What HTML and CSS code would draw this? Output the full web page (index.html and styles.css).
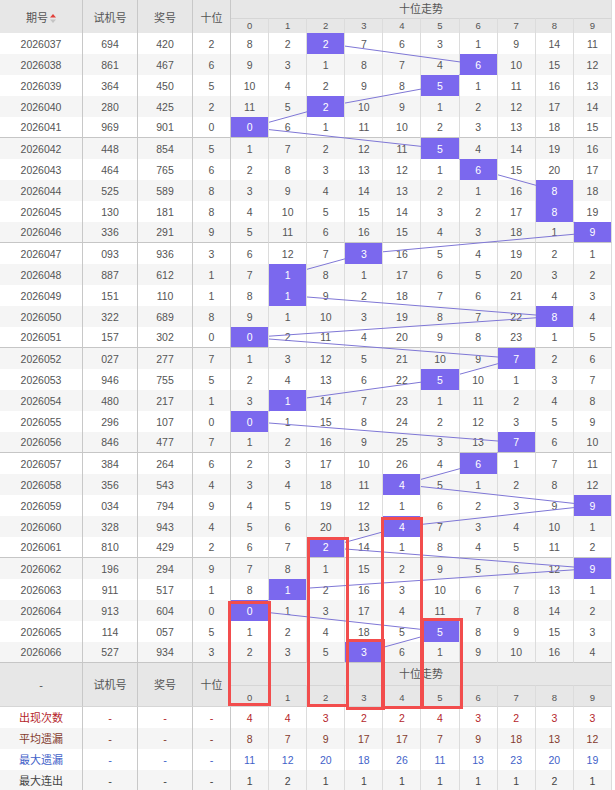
FILE: index.html
```html
<!DOCTYPE html>
<html lang="zh-CN">
<head>
<meta charset="utf-8">
<title>十位走势</title>
<link rel="stylesheet" href="styles.css">
</head>
<body>
<div class="board">
<table class="chart">
<colgroup><col class="c-issue"><col class="c-test"><col class="c-win"><col class="c-ten"><col><col><col><col><col><col><col><col><col><col></colgroup>
<thead>
<tr class="h1"><th rowspan="2" class="k">期号<svg class="sort" width="6" height="9" viewBox="0 0 6 9"><path d="M3 0 L6 3.5 L0 3.5 Z" fill="#e2403a"/><path d="M0 5.5 L6 5.5 L3 9 Z" fill="#c4c4c4"/></svg></th><th rowspan="2" class="k">试机号</th><th rowspan="2" class="k">奖号</th><th rowspan="2" class="k">十位</th><th colspan="10" class="span">十位走势</th></tr>
<tr class="h2"><th>0</th><th>1</th><th>2</th><th>3</th><th>4</th><th>5</th><th>6</th><th>7</th><th>8</th><th>9</th></tr>
</thead>
<tbody>
<tr><td class="k">2026037</td><td class="k">694</td><td class="k">420</td><td class="k">2</td><td>8</td><td>2</td><td class="hit">2</td><td>7</td><td>6</td><td>3</td><td>1</td><td>9</td><td>14</td><td>11</td></tr>
<tr><td class="k">2026038</td><td class="k">861</td><td class="k">467</td><td class="k">6</td><td>9</td><td>3</td><td>1</td><td>8</td><td>7</td><td>4</td><td class="hit">6</td><td>10</td><td>15</td><td>12</td></tr>
<tr><td class="k">2026039</td><td class="k">364</td><td class="k">450</td><td class="k">5</td><td>10</td><td>4</td><td>2</td><td>9</td><td>8</td><td class="hit">5</td><td>1</td><td>11</td><td>16</td><td>13</td></tr>
<tr><td class="k">2026040</td><td class="k">280</td><td class="k">425</td><td class="k">2</td><td>11</td><td>5</td><td class="hit">2</td><td>10</td><td>9</td><td>1</td><td>2</td><td>12</td><td>17</td><td>14</td></tr>
<tr class="ge"><td class="k">2026041</td><td class="k">969</td><td class="k">901</td><td class="k">0</td><td class="hit">0</td><td>6</td><td>1</td><td>11</td><td>10</td><td>2</td><td>3</td><td>13</td><td>18</td><td>15</td></tr>
<tr><td class="k">2026042</td><td class="k">448</td><td class="k">854</td><td class="k">5</td><td>1</td><td>7</td><td>2</td><td>12</td><td>11</td><td class="hit">5</td><td>4</td><td>14</td><td>19</td><td>16</td></tr>
<tr><td class="k">2026043</td><td class="k">464</td><td class="k">765</td><td class="k">6</td><td>2</td><td>8</td><td>3</td><td>13</td><td>12</td><td>1</td><td class="hit">6</td><td>15</td><td>20</td><td>17</td></tr>
<tr><td class="k">2026044</td><td class="k">525</td><td class="k">589</td><td class="k">8</td><td>3</td><td>9</td><td>4</td><td>14</td><td>13</td><td>2</td><td>1</td><td>16</td><td class="hit">8</td><td>18</td></tr>
<tr><td class="k">2026045</td><td class="k">130</td><td class="k">181</td><td class="k">8</td><td>4</td><td>10</td><td>5</td><td>15</td><td>14</td><td>3</td><td>2</td><td>17</td><td class="hit">8</td><td>19</td></tr>
<tr class="ge"><td class="k">2026046</td><td class="k">336</td><td class="k">291</td><td class="k">9</td><td>5</td><td>11</td><td>6</td><td>16</td><td>15</td><td>4</td><td>3</td><td>18</td><td>1</td><td class="hit">9</td></tr>
<tr><td class="k">2026047</td><td class="k">093</td><td class="k">936</td><td class="k">3</td><td>6</td><td>12</td><td>7</td><td class="hit">3</td><td>16</td><td>5</td><td>4</td><td>19</td><td>2</td><td>1</td></tr>
<tr><td class="k">2026048</td><td class="k">887</td><td class="k">612</td><td class="k">1</td><td>7</td><td class="hit">1</td><td>8</td><td>1</td><td>17</td><td>6</td><td>5</td><td>20</td><td>3</td><td>2</td></tr>
<tr><td class="k">2026049</td><td class="k">151</td><td class="k">110</td><td class="k">1</td><td>8</td><td class="hit">1</td><td>9</td><td>2</td><td>18</td><td>7</td><td>6</td><td>21</td><td>4</td><td>3</td></tr>
<tr><td class="k">2026050</td><td class="k">322</td><td class="k">689</td><td class="k">8</td><td>9</td><td>1</td><td>10</td><td>3</td><td>19</td><td>8</td><td>7</td><td>22</td><td class="hit">8</td><td>4</td></tr>
<tr class="ge"><td class="k">2026051</td><td class="k">157</td><td class="k">302</td><td class="k">0</td><td class="hit">0</td><td>2</td><td>11</td><td>4</td><td>20</td><td>9</td><td>8</td><td>23</td><td>1</td><td>5</td></tr>
<tr><td class="k">2026052</td><td class="k">027</td><td class="k">277</td><td class="k">7</td><td>1</td><td>3</td><td>12</td><td>5</td><td>21</td><td>10</td><td>9</td><td class="hit">7</td><td>2</td><td>6</td></tr>
<tr><td class="k">2026053</td><td class="k">946</td><td class="k">755</td><td class="k">5</td><td>2</td><td>4</td><td>13</td><td>6</td><td>22</td><td class="hit">5</td><td>10</td><td>1</td><td>3</td><td>7</td></tr>
<tr><td class="k">2026054</td><td class="k">480</td><td class="k">217</td><td class="k">1</td><td>3</td><td class="hit">1</td><td>14</td><td>7</td><td>23</td><td>1</td><td>11</td><td>2</td><td>4</td><td>8</td></tr>
<tr><td class="k">2026055</td><td class="k">296</td><td class="k">107</td><td class="k">0</td><td class="hit">0</td><td>1</td><td>15</td><td>8</td><td>24</td><td>2</td><td>12</td><td>3</td><td>5</td><td>9</td></tr>
<tr class="ge"><td class="k">2026056</td><td class="k">846</td><td class="k">477</td><td class="k">7</td><td>1</td><td>2</td><td>16</td><td>9</td><td>25</td><td>3</td><td>13</td><td class="hit">7</td><td>6</td><td>10</td></tr>
<tr><td class="k">2026057</td><td class="k">384</td><td class="k">264</td><td class="k">6</td><td>2</td><td>3</td><td>17</td><td>10</td><td>26</td><td>4</td><td class="hit">6</td><td>1</td><td>7</td><td>11</td></tr>
<tr><td class="k">2026058</td><td class="k">356</td><td class="k">543</td><td class="k">4</td><td>3</td><td>4</td><td>18</td><td>11</td><td class="hit">4</td><td>5</td><td>1</td><td>2</td><td>8</td><td>12</td></tr>
<tr><td class="k">2026059</td><td class="k">034</td><td class="k">794</td><td class="k">9</td><td>4</td><td>5</td><td>19</td><td>12</td><td>1</td><td>6</td><td>2</td><td>3</td><td>9</td><td class="hit">9</td></tr>
<tr><td class="k">2026060</td><td class="k">328</td><td class="k">943</td><td class="k">4</td><td>5</td><td>6</td><td>20</td><td>13</td><td class="hit">4</td><td>7</td><td>3</td><td>4</td><td>10</td><td>1</td></tr>
<tr class="ge"><td class="k">2026061</td><td class="k">810</td><td class="k">429</td><td class="k">2</td><td>6</td><td>7</td><td class="hit">2</td><td>14</td><td>1</td><td>8</td><td>4</td><td>5</td><td>11</td><td>2</td></tr>
<tr><td class="k">2026062</td><td class="k">196</td><td class="k">294</td><td class="k">9</td><td>7</td><td>8</td><td>1</td><td>15</td><td>2</td><td>9</td><td>5</td><td>6</td><td>12</td><td class="hit">9</td></tr>
<tr><td class="k">2026063</td><td class="k">911</td><td class="k">517</td><td class="k">1</td><td>8</td><td class="hit">1</td><td>2</td><td>16</td><td>3</td><td>10</td><td>6</td><td>7</td><td>13</td><td>1</td></tr>
<tr><td class="k">2026064</td><td class="k">913</td><td class="k">604</td><td class="k">0</td><td class="hit">0</td><td>1</td><td>3</td><td>17</td><td>4</td><td>11</td><td>7</td><td>8</td><td>14</td><td>2</td></tr>
<tr><td class="k">2026065</td><td class="k">114</td><td class="k">057</td><td class="k">5</td><td>1</td><td>2</td><td>4</td><td>18</td><td>5</td><td class="hit">5</td><td>8</td><td>9</td><td>15</td><td>3</td></tr>
<tr class="ge"><td class="k">2026066</td><td class="k">527</td><td class="k">934</td><td class="k">3</td><td>2</td><td>3</td><td>5</td><td class="hit">3</td><td>6</td><td>1</td><td>9</td><td>10</td><td>16</td><td>4</td></tr>
</tbody>
<tfoot>
<tr class="f1"><th rowspan="2" class="k">-</th><th rowspan="2" class="k">试机号</th><th rowspan="2" class="k">奖号</th><th rowspan="2" class="k">十位</th><th colspan="10" class="span">十位走势</th></tr>
<tr class="f2"><th>0</th><th>1</th><th>2</th><th>3</th><th>4</th><th>5</th><th>6</th><th>7</th><th>8</th><th>9</th></tr>
<tr class="s-count"><td class="k">出现次数</td><td class="k">-</td><td class="k">-</td><td class="k">-</td><td>4</td><td>4</td><td>3</td><td>2</td><td>2</td><td>4</td><td>3</td><td>2</td><td>3</td><td>3</td></tr>
<tr class="s-avg"><td class="k">平均遗漏</td><td class="k">-</td><td class="k">-</td><td class="k">-</td><td>8</td><td>7</td><td>9</td><td>17</td><td>17</td><td>7</td><td>9</td><td>18</td><td>13</td><td>12</td></tr>
<tr class="s-max"><td class="k">最大遗漏</td><td class="k">-</td><td class="k">-</td><td class="k">-</td><td>11</td><td>12</td><td>20</td><td>18</td><td>26</td><td>11</td><td>13</td><td>23</td><td>20</td><td>19</td></tr>
<tr class="s-run"><td class="k">最大连出</td><td class="k">-</td><td class="k">-</td><td class="k">-</td><td>1</td><td>2</td><td>1</td><td>1</td><td>1</td><td>1</td><td>1</td><td>1</td><td>2</td><td>1</td></tr>
</tfoot>
</table>
<svg class="trend-lines" width="612" height="790"><polyline points="" /></svg>
<div class="mark m0"></div>
<div class="mark m2"></div>
<div class="mark m3"></div>
<div class="mark m4"></div>
<div class="mark m5"></div>
</div>
<script src="script.js"></script>
</body>
</html>
```

FILE: styles.css
```css
* { box-sizing: border-box; }
html, body { margin: 0; padding: 0; background: #fff; }
body {
  font-family: "Liberation Sans", "Noto Sans CJK SC", sans-serif;
  color: #555;
}
.board { position: relative; width: 612px; }
.chart {
  width: 612px;
  table-layout: fixed;
  border-collapse: separate;
  border-spacing: 0;
  font-size: 10.5px;
}
.c-issue { width: 83px; }
.c-test { width: 55px; }
.c-win { width: 55px; }
.c-ten { width: 38px; }
.chart th, .chart td {
  padding: 0;
  text-align: center;
  vertical-align: middle;
  font-weight: normal;
  border-right: 1px solid #dcdcdc;
  line-height: 12px;
}
.chart .k { border-right-color: #c8c8c8; }
.chart td { height: 21px; }
.chart thead th, .chart tfoot th {
  background: #e7e7e7;
  color: #555;
  font-size: 11px;
}
.chart .h1 th { height: 18px; }
.chart .h1 th.k { padding-top: 2px; }
.chart .h2 th {
  height: 15px;
  font-size: 9.5px;
  border-top: 1px solid #d6d6d6;
}
.chart .f1 th { height: 22px; border-top: 0; }
.chart .f2 th {
  height: 22px;
  font-size: 9.5px;
  border-top: 1px solid #d6d6d6;
  border-bottom: 1px solid #d6d6d6;
}
.chart .f2 th { padding-top: 3px; }
.chart .f1 th.k { border-bottom: 1px solid #d6d6d6; }
.sort { vertical-align: -1px; margin-left: 2px; }
.chart tbody tr:nth-child(even) td { background: #f5f5f5; }
.chart tbody tr.ge td { border-bottom: 1px solid #c6c6c6; }
.chart td.hit {
  background: #7b68ee;
  color: #fff;
  position: relative;
  z-index: 2;
}
.chart tbody tr:nth-child(even) td.hit { background: #7b68ee; }
.chart tfoot td { font-size: 10.5px; }
.chart .s-avg td, .chart .s-run td { background: #f5f5f5; }
.chart .s-count td { color: #b5262c; }
.chart .s-avg td { color: #843b2e; }
.chart .s-max td { color: #3f62c9; }
.chart .s-run td { color: #444; }
.chart tfoot td.k { font-size: 11px; }
.trend-lines {
  position: absolute;
  left: 0;
  top: 0;
  z-index: 1;
  pointer-events: none;
}
.trend-lines polyline {
  fill: none;
  stroke: #7f77d6;
  stroke-width: 1;
}
.mark {
  position: absolute;
  z-index: 3;
  border: 3px solid #f24d4d;
}
.m0 { left: 228px; top: 601px; width: 43px; height: 105px; }
.m2 { left: 307px; top: 537px; width: 42px; height: 170px; }
.m3 { left: 346px; top: 639px; width: 39px; height: 71px; }
.m4 { left: 381px; top: 517px; width: 42px; height: 192px; }
.m5 { left: 421px; top: 618px; width: 42px; height: 91px; }
```

FILE: script.js
```js
(function () {
  var board = document.querySelector('.board');
  var svg = document.querySelector('.trend-lines');
  var line = svg.querySelector('polyline');
  var b = board.getBoundingClientRect();
  svg.setAttribute('width', b.width);
  svg.setAttribute('height', b.height);
  svg.setAttribute('viewBox', '0 0 ' + b.width + ' ' + b.height);
  var pts = [];
  var cells = document.querySelectorAll('.chart tbody td.hit');
  for (var i = 0; i < cells.length; i++) {
    var r = cells[i].getBoundingClientRect();
    var x = (r.left + r.right) / 2 - b.left;
    var y = (r.top + r.bottom) / 2 - b.top;
    pts.push(x.toFixed(1) + ',' + y.toFixed(1));
  }
  line.setAttribute('points', pts.join(' '));
})();
```
